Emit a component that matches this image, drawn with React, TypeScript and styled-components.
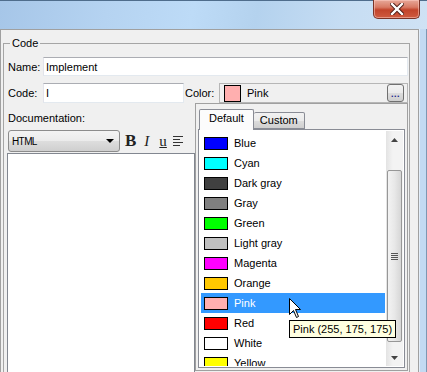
import React from "react";
import styled, { createGlobalStyle } from "styled-components";

const colors = [
  { name: "Blue", hex: "#0000ff" },
  { name: "Cyan", hex: "#00ffff" },
  { name: "Dark gray", hex: "#404040" },
  { name: "Gray", hex: "#808080" },
  { name: "Green", hex: "#00ff00" },
  { name: "Light gray", hex: "#c0c0c0" },
  { name: "Magenta", hex: "#ff00ff" },
  { name: "Orange", hex: "#ffc800" },
  { name: "Pink", hex: "#ffafaf" },
  { name: "Red", hex: "#ff0000" },
  { name: "White", hex: "#ffffff" },
  { name: "Yellow", hex: "#ffff00" },
];

const GlobalStyle = createGlobalStyle`
  html, body {
    margin: 0;
    padding: 0;
  }
  body {
    font-family: "Liberation Sans", Arial, sans-serif;
    font-size: 11px;
    color: #000;
    overflow: hidden;
  }
  * {
    box-sizing: border-box;
  }
`;

const Window = styled.div`
  position: relative;
  width: 427px;
  height: 372px;
  display: flex;
  flex-direction: column;
  overflow: hidden;
  background: #c3daf2;
`;

const TitleBar = styled.div`
  height: 29px;
  flex-shrink: 0;
  display: flex;
  justify-content: flex-end;
  align-items: flex-start;
  padding-right: 7px;
  background: linear-gradient(100deg, #a6c6e8 0%, #b5d3f1 25%, #bddbf7 45%, #b4d2ee 60%, #c6ddf3 80%, #cfe2f4 100%);
  box-shadow: inset 0 1px 0 #4f6d8c;
`;

const CloseButton = styled.div`
  width: 47px;
  height: 19px;
  display: flex;
  align-items: center;
  justify-content: center;
  border: 1px solid #7a3327;
  border-top: none;
  border-radius: 0 0 5px 5px;
  background: linear-gradient(180deg, #e7a899 0%, #d87a64 40%, #c2442b 55%, #cf5b40 100%);
  box-shadow: inset 0 0 0 1px rgba(255, 210, 200, 0.5);
`;

const Body = styled.div`
  flex: 1;
  display: flex;
  min-height: 0;
`;

const Panel = styled.div`
  width: 419px;
  flex-shrink: 0;
  background: #f0f0f0;
  border: 1px solid #a0a0a0;
  border-bottom: none;
  display: flex;
  flex-direction: column;
  min-height: 0;
`;

const FrameEdge = styled.div`
  flex: 1;
  border-left: 1px solid #e3eefa;
  border-right: 1px solid #7e97b2;
`;

const GroupBox = styled.fieldset`
  margin: 7px 8px 0 2px;
  padding: 7px 1px 0 3px;
  border: 1px solid #a5a5a5;
  border-bottom: none;
  min-width: 0;
`;

const Legend = styled.legend`
  margin-left: 3px;
  padding: 0 2px;
  line-height: 13px;
`;

const Row = styled.div<{ $h: number; $mt?: number }>`
  display: flex;
  align-items: center;
  height: ${({ $h }) => $h}px;
  margin-top: ${({ $mt }) => $mt || 0}px;
`;

const Label = styled.span<{ $w: number }>`
  width: ${({ $w }) => $w}px;
  flex-shrink: 0;
  padding-left: 1px;
`;

const TextInput = styled.div<{ $w?: number }>`
  height: 100%;
  ${({ $w }) => ($w ? `width: ${$w}px; flex-shrink: 0;` : "flex: 1;")}
  display: flex;
  align-items: center;
  padding-left: 2px;
  background: #fff;
  border: 1px solid #abadb3;
  border-right-color: #e3e9ef;
  border-bottom-color: #e3e9ef;
  border-left-color: #e2e3ea;
`;

const ColorField = styled.div`
  position: relative;
  flex: 1;
  height: 100%;
  display: flex;
  align-items: center;
  gap: 6px;
  padding: 0 3px 0 4px;
  border: 1px solid #b6b6b6;
  background: #f0f0f0;
`;

const Swatch = styled.span<{ $c: string; $w: number; $h: number }>`
  width: ${({ $w }) => $w}px;
  height: ${({ $h }) => $h}px;
  flex-shrink: 0;
  background: ${({ $c }) => $c};
  border: 1px solid #000;
`;

const ColorName = styled.span`
  flex: 1;
`;

const MoreButton = styled.div`
  width: 17px;
  height: 18px;
  display: flex;
  align-items: flex-end;
  justify-content: center;
  padding-bottom: 4px;
  border: 1px solid #707070;
  border-radius: 3px;
  background: linear-gradient(180deg, #f2f2f2 0%, #ebebeb 50%, #dddddd 51%, #cfcfcf 100%);
  font-size: 9px;
  line-height: 6px;
  letter-spacing: 0.5px;
  color: #1a1a8a;
  font-weight: bold;
`;

const DocLabel = styled.div`
  margin-top: 9px;
  line-height: 13px;
  padding-left: 1px;
`;

const EditorColumn = styled.div`
  width: 188px;
  margin-top: 5px;
  display: flex;
  flex-direction: column;
`;

const Toolbar = styled.div`
  height: 22px;
  display: flex;
  align-items: center;
  padding-left: 1px;
`;

const Combo = styled.div`
  width: 112px;
  height: 22px;
  display: flex;
  align-items: center;
  justify-content: space-between;
  padding: 0 5px 0 3px;
  border: 1px solid #8c8c8c;
  border-radius: 3px;
  background: linear-gradient(180deg, #f3f3f3 0%, #ebebeb 50%, #dddddd 51%, #cfcfcf 100%);
  font-size: 10px;
  letter-spacing: -0.6px;
`;

const ComboArrow = styled.span`
  width: 0;
  height: 0;
  border-left: 4px solid transparent;
  border-right: 4px solid transparent;
  border-top: 4px solid #000;
`;

const FormatButton = styled.span<{ $ml: number; $italic?: boolean; $bold?: boolean; $under?: boolean }>`
  margin-left: ${({ $ml }) => $ml}px;
  font-family: "Liberation Serif", "Times New Roman", serif;
  font-size: ${({ $bold }) => ($bold ? 17 : 15)}px;
  font-weight: ${({ $bold }) => ($bold ? "bold" : "normal")};
  font-style: ${({ $italic }) => ($italic ? "italic" : "normal")};
  text-decoration: ${({ $under }) => ($under ? "underline" : "none")};
  line-height: 16px;
  color: #222;
`;

const AlignIcon = styled.svg`
  margin-left: 6px;
`;

const Editor = styled.div`
  height: 230px;
  background: #fff;
  border: 1px solid #828790;
  margin-top: 1px;
`;

const Popup = styled.div`
  position: absolute;
  top: calc(100% + 1px);
  right: -1px;
  width: 213px;
  height: 268px;
  padding: 5px 2px 2px 2px;
  border: 1px solid #a0a0a0;
  background: #f0f0f0;
  display: flex;
  flex-direction: column;
  z-index: 2;
`;

const Tabs = styled.div`
  display: flex;
  align-items: flex-end;
  height: 20px;
  padding-left: 1px;
  position: relative;
  z-index: 1;
`;

const Tab = styled.div<{ $active?: boolean }>`
  height: ${({ $active }) => ($active ? 21 : 17)}px;
  margin-bottom: ${({ $active }) => ($active ? -1 : 0)}px;
  padding: ${({ $active }) => ($active ? "0 9px 4px" : "0 6px 1px")};
  display: flex;
  align-items: center;
  border: 1px solid #898c95;
  border-bottom: ${({ $active }) => ($active ? "none" : "1px solid #898c95")};
  border-left: ${({ $active }) => ($active ? "1px solid #898c95" : "none")};
  border-radius: 2px 2px 0 0;
  background: ${({ $active }) =>
    $active ? "#fcfcfc" : "linear-gradient(180deg, #f2f2f2 0%, #ebebeb 50%, #dddddd 51%, #cfcfcf 100%)"};
`;

const TabPanel = styled.div`
  flex: 1;
  display: flex;
  padding: 1px 1px 1px 0;
  border: 1px solid #898c95;
  background: #fff;
  min-height: 0;
`;

const ListItems = styled.div`
  flex: 1;
  padding: 2px 1px 0 2px;
  overflow: hidden;
`;

const Item = styled.div<{ $selected?: boolean }>`
  height: 20px;
  display: flex;
  align-items: center;
  gap: 6px;
  padding-left: 3px;
  background: ${({ $selected }) => ($selected ? "#3399ff" : "transparent")};
  color: ${({ $selected }) => ($selected ? "#fff" : "#000")};
`;

const ScrollBar = styled.div`
  width: 17px;
  flex-shrink: 0;
  display: flex;
  flex-direction: column;
  background: linear-gradient(90deg, #e3e3e3 0%, #f3f3f3 40%, #f3f3f3 100%);
`;

const ScrollArrow = styled.div`
  height: 17px;
  display: flex;
  align-items: center;
  justify-content: center;
`;

const Thumb = styled.div`
  margin: 22px 1px 7px 1px;
  flex: 1;
  display: flex;
  align-items: center;
  justify-content: center;
  border: 1px solid #979797;
  border-radius: 2px;
  background: linear-gradient(90deg, #f3f3f3 0%, #e8e8e8 50%, #d6d6d6 100%);
`;

const Tooltip = styled.div`
  position: absolute;
  left: 289px;
  top: 320px;
  height: 18px;
  padding: 0 3px 0 3px;
  display: flex;
  align-items: center;
  background: #ffffe1;
  border: 1px solid #000;
  white-space: nowrap;
  z-index: 5;
`;

const Cursor = styled.svg`
  position: absolute;
  left: 289px;
  top: 298px;
  z-index: 6;
`;

const App = () => {
  return (
    <>
      <GlobalStyle />
      <Window>
        <TitleBar>
          <CloseButton>
            <svg width="14" height="12" viewBox="0 0 14 12">
              <path d="M2 1 L12 11 M12 1 L2 11" stroke="#4a1a14" strokeWidth="4.2" strokeLinecap="square" />
              <path d="M2 1 L12 11 M12 1 L2 11" stroke="#fff" strokeWidth="2.4" strokeLinecap="square" />
            </svg>
          </CloseButton>
        </TitleBar>
        <Body>
          <Panel>
            <GroupBox>
              <Legend>Code</Legend>
              <Row $h={19}>
                <Label $w={36}>Name:</Label>
                <TextInput>Implement</TextInput>
              </Row>
              <Row $h={20} $mt={7}>
                <Label $w={36}>Code:</Label>
                <TextInput $w={141}>I</TextInput>
                <Label $w={35}>Color:</Label>
                <ColorField>
                  <Swatch $c="#ffafaf" $w={17} $h={17} />
                  <ColorName>Pink</ColorName>
                  <MoreButton>...</MoreButton>
                  <Popup>
                    <Tabs>
                      <Tab $active>Default</Tab>
                      <Tab>Custom</Tab>
                    </Tabs>
                    <TabPanel>
                      <ListItems>
                        {colors.map((c) => (
                          <Item key={c.name} $selected={c.name === "Pink"}>
                            <Swatch $c={c.hex} $w={24} $h={13} />
                            <span>{c.name}</span>
                          </Item>
                        ))}
                      </ListItems>
                      <ScrollBar>
                        <ScrollArrow>
                          <svg width="7" height="4" viewBox="0 0 7 4">
                            <path d="M0 4 L3.5 0 L7 4 Z" fill="#444" />
                          </svg>
                        </ScrollArrow>
                        <Thumb>
                          <svg width="7" height="7" viewBox="0 0 7 7">
                            <path d="M0 0.5 H7 M0 2.5 H7 M0 4.5 H7 M0 6.5 H7" stroke="#555" strokeWidth="1" />
                          </svg>
                        </Thumb>
                        <ScrollArrow>
                          <svg width="7" height="4" viewBox="0 0 7 4">
                            <path d="M0 0 L3.5 4 L7 0 Z" fill="#444" />
                          </svg>
                        </ScrollArrow>
                      </ScrollBar>
                    </TabPanel>
                  </Popup>
                </ColorField>
              </Row>
              <DocLabel>Documentation:</DocLabel>
              <EditorColumn>
                <Toolbar>
                  <Combo>
                    <span>HTML</span>
                    <ComboArrow />
                  </Combo>
                  <FormatButton $ml={5} $bold>B</FormatButton>
                  <FormatButton $ml={8} $italic>I</FormatButton>
                  <FormatButton $ml={10} $under>u</FormatButton>
                  <AlignIcon width="11" height="10" viewBox="0 0 11 10">
                    <path d="M0 0.5 H10 M0 3.5 H7 M0 6.5 H10 M0 9.5 H7" stroke="#333" strokeWidth="1" />
                  </AlignIcon>
                </Toolbar>
                <Editor />
              </EditorColumn>
            </GroupBox>
          </Panel>
          <FrameEdge />
        </Body>
        <Tooltip>Pink (255, 175, 175)</Tooltip>
        <Cursor width="13" height="21" viewBox="0 0 13 21">
          <path d="M0.5 0.5 L0.5 16.5 L4.5 12.5 L7.5 19.5 L9.5 18.5 L6.5 11.5 L11.5 11.5 Z" fill="#fff" stroke="#000" strokeWidth="1" />
        </Cursor>
      </Window>
    </>
  );
};

export default App;
